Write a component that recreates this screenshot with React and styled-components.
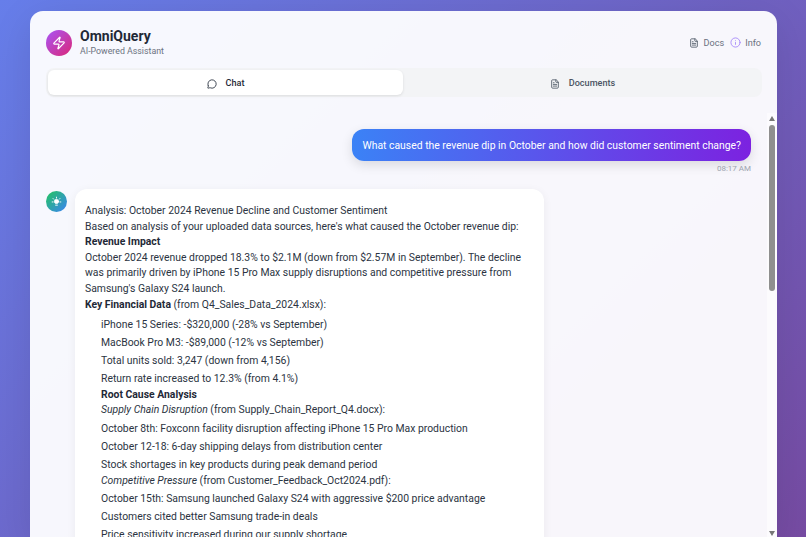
import React from 'react'
import styled, { createGlobalStyle } from 'styled-components'
import { Zap, FileText, Info, MessageCircle } from 'lucide-react'

const Global = createGlobalStyle`
    html, body {
        margin: 0;
        height: 100%;
        overflow: hidden;
    }
    body {
        font-family: Roboto, "Noto Sans", sans-serif;
        background: linear-gradient(135deg, #667eea 0%, #764ba2 100%);
    }
    #root {
        height: 100%;
    }
`

const Page = styled.div`
    height: 537px;
    box-sizing: border-box;
    padding: 11px 29px 0 30px;
    overflow: hidden;
`

const Card = styled.div`
    height: 529px;
    display: flex;
    flex-direction: column;
    background-color: rgba(255, 255, 255, 0.95);
    border-radius: 13px 13px 0 0;
    box-shadow: 0 10px 40px rgba(0, 0, 0, 0.1);
`

const Header = styled.div`
    display: flex;
    justify-content: space-between;
    align-items: center;
    padding: 16px 16px 0;
`

const Brand = styled.div`
    display: flex;
    align-items: center;
    gap: 8px;
`

const Logo = styled.div`
    width: 26px;
    height: 26px;
    border-radius: 50%;
    display: flex;
    align-items: center;
    justify-content: center;
    color: white;
    background: linear-gradient(135deg, #a855f7, #db2777);
`

const Title = styled.div`
    font-size: 14px;
    font-weight: 700;
    line-height: 18px;
    color: #1f2937;
`

const Subtitle = styled.div`
    font-size: 8.8px;
    line-height: 13px;
    color: #6b7280;
`

const HeaderLinks = styled.div`
    display: flex;
    align-items: center;
    gap: 6px;
    font-size: 9.1px;
    color: #6b7280;
`

const HeaderLink = styled.span`
    display: flex;
    align-items: center;
    gap: ${p => p.$gap || 5}px;
    svg {
        color: ${p => p.$iconColor || '#4b5563'};
    }
`

const Tabs = styled.div`
    display: flex;
    margin: 10px 15px 0 16px;
    padding: 2px;
    gap: 2px;
    border-radius: 8px;
    background-color: #f3f4f6;
`

const Tab = styled.div`
    flex: 1;
    height: 25px;
    display: flex;
    align-items: center;
    justify-content: center;
    gap: 9px;
    border-radius: 6px;
    font-size: 9.1px;
    font-weight: 500;
    color: ${p => (p.$active ? '#1f2937' : '#4b5563')};
    background-color: ${p => (p.$active ? 'white' : 'transparent')};
    box-shadow: ${p => (p.$active ? '0 1px 3px rgba(0, 0, 0, 0.1)' : 'none')};
    svg {
        position: relative;
        top: 1px;
    }
`

const Body = styled.div`
    flex: 1;
    min-height: 0;
    display: flex;
    margin-top: 16px;
`

const Messages = styled.div`
    flex: 1;
    min-width: 0;
    overflow: hidden;
    padding: 16px 16px 0 16px;
`

const Rail = styled.div`
    flex: none;
    width: 10px;
    display: flex;
    flex-direction: column;
    align-items: center;
    background-color: rgba(255, 255, 255, 0.5);
`

const Arrow = styled.svg`
    flex: none;
    width: 6px;
    height: 5px;
    fill: #777;
    margin-top: ${p => (p.$down ? 'auto' : '3px')};
    margin-bottom: ${p => (p.$down ? '4px' : '0')};
`

const Thumb = styled.div`
    flex: none;
    width: 6px;
    height: 166px;
    margin-top: 4px;
    border-radius: 3px;
    background-color: #8f8f8f;
`

const UserRow = styled.div`
    display: flex;
    flex-direction: column;
    align-items: flex-end;
`

const UserBubble = styled.div`
    padding: 8.6px 10px 7.4px;
    font-size: 10.4px;
    line-height: 15.6px;
    color: white;
    border-radius: 12px;
    background: linear-gradient(90deg, #3b82f6, #7c22e0);
    box-shadow: 0 4px 12px rgba(0, 0, 0, 0.12);
`

const Time = styled.div`
    margin-top: 2px;
    font-size: 8px;
    line-height: 12px;
    color: #9ca3af;
`

const BotRow = styled.div`
    display: flex;
    gap: 8px;
    margin-top: 14px;
`

const BotAvatar = styled.div`
    flex: none;
    width: 21px;
    height: 21px;
    margin-top: 2px;
    border-radius: 50%;
    display: flex;
    align-items: center;
    justify-content: center;
    background: linear-gradient(135deg, #22c55e, #3b82f6);
`

const BotBubble = styled.div`
    width: 469px;
    box-sizing: border-box;
    padding: 14.4px 10px;
    font-size: 10.4px;
    line-height: 15.6px;
    color: #2b3442;
    background-color: white;
    border-radius: 12px;
    box-shadow: 0 2px 10px rgba(0, 0, 0, 0.06);
    strong {
        color: #1f2937;
    }
`

const List = styled.ul`
    margin: 4.6px 0 0;
    padding: 0 0 0 16px;
    list-style: none;
`

const Item = styled.li`
    margin-top: 2.6px;
`

const BulbIcon = () => (
    <svg width="11" height="11" viewBox="0 0 24 24" fill="white" stroke="white" strokeWidth="2" strokeLinecap="round">
        <circle cx="12" cy="12" r="4.5" />
        <path d="M10 20h4M12 2.5v2M4.5 5.5l1.5 1.5M19.5 5.5L18 7M2.5 13h2M19.5 13h2" fill="none" />
    </svg>
)

const App = () => {
    return (
        <Page>
            <Global />
            <Card>
                <Header>
                    <Brand>
                        <Logo><Zap size={14} /></Logo>
                        <div>
                            <Title>OmniQuery</Title>
                            <Subtitle>AI-Powered Assistant</Subtitle>
                        </div>
                    </Brand>
                    <HeaderLinks>
                        <HeaderLink><FileText size={10} />Docs</HeaderLink>
                        <HeaderLink $iconColor="#a78bfa" $gap={4}><Info size={11} />Info</HeaderLink>
                    </HeaderLinks>
                </Header>
                <Tabs>
                    <Tab $active><MessageCircle size={10} />Chat</Tab>
                    <Tab><FileText size={10} />Documents</Tab>
                </Tabs>
                <Body>
                    <Messages>
                        <UserRow>
                            <UserBubble>What caused the revenue dip in October and how did customer sentiment change?</UserBubble>
                            <Time>08:17 AM</Time>
                        </UserRow>
                        <BotRow>
                            <BotAvatar><BulbIcon /></BotAvatar>
                            <BotBubble>
                                <div>Analysis: October 2024 Revenue Decline and Customer Sentiment</div>
                                <div>Based on analysis of your uploaded data sources, here's what caused the October revenue dip:</div>
                                <div><strong>Revenue Impact</strong></div>
                                <div>October 2024 revenue dropped 18.3% to $2.1M (down from $2.57M in September). The decline was primarily driven by iPhone 15 Pro Max supply disruptions and competitive pressure from Samsung's Galaxy S24 launch.</div>
                                <div><strong>Key Financial Data</strong> (from Q4_Sales_Data_2024.xlsx):</div>
                                <List>
                                    <Item>iPhone 15 Series: -$320,000 (-28% vs September)</Item>
                                    <Item>MacBook Pro M3: -$89,000 (-12% vs September)</Item>
                                    <Item>Total units sold: 3,247 (down from 4,156)</Item>
                                    <Item>Return rate increased to 12.3% (from 4.1%)</Item>
                                    <div><strong>Root Cause Analysis</strong></div>
                                    <div><em>Supply Chain Disruption</em> (from Supply_Chain_Report_Q4.docx):</div>
                                    <Item>October 8th: Foxconn facility disruption affecting iPhone 15 Pro Max production</Item>
                                    <Item>October 12-18: 6-day shipping delays from distribution center</Item>
                                    <Item>Stock shortages in key products during peak demand period</Item>
                                    <div><em>Competitive Pressure</em> (from Customer_Feedback_Oct2024.pdf):</div>
                                    <Item>October 15th: Samsung launched Galaxy S24 with aggressive $200 price advantage</Item>
                                    <Item>Customers cited better Samsung trade-in deals</Item>
                                    <Item>Price sensitivity increased during our supply shortage</Item>
                                </List>
                            </BotBubble>
                        </BotRow>
                    </Messages>
                    <Rail>
                        <Arrow viewBox="0 0 6 5"><path d="M3 0l3 5H0z" /></Arrow>
                        <Thumb />
                        <Arrow $down viewBox="0 0 6 5"><path d="M0 0h6L3 5z" /></Arrow>
                    </Rail>
                </Body>
            </Card>
        </Page>
    )
}

export default App
